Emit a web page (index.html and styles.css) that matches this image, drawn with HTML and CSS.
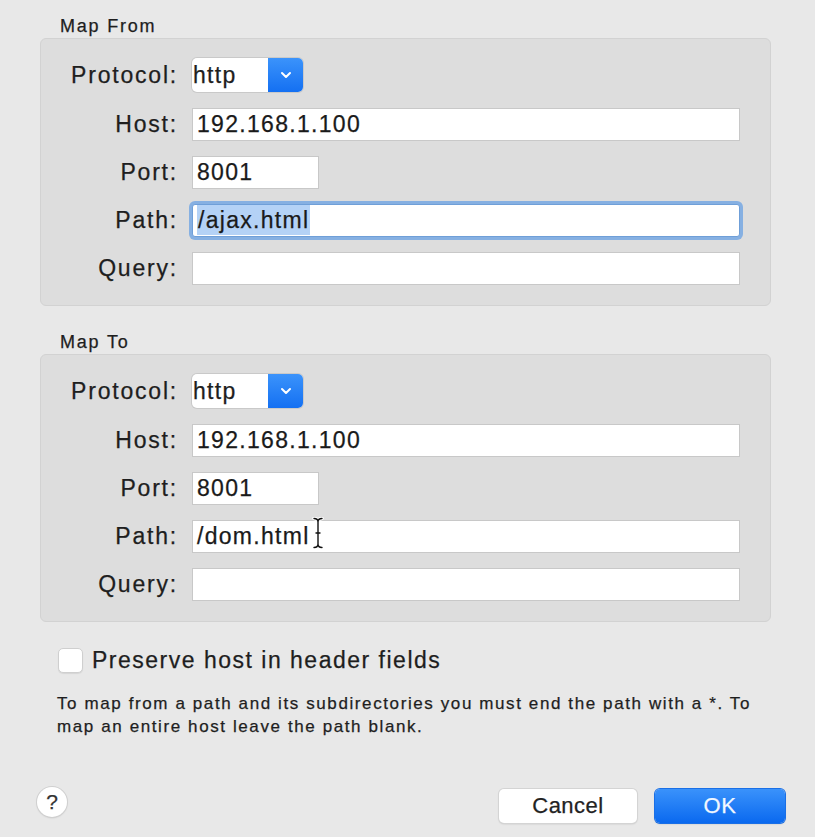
FILE: index.html
```html
<!DOCTYPE html>
<html>
<head>
<meta charset="utf-8">
<link rel="stylesheet" href="styles.css">
</head>
<body>
<div class="dialog">
  <div class="group-title">Map From</div>
  <div class="group">
    <div class="lbl">Protocol:</div>
    <div class="select">
      <span class="sel-val">http</span>
      <span class="sel-btn"><svg width="14" height="14" viewBox="0 0 14 14"><path d="M3 5 L7 9 L11 5" fill="none" stroke="#fff" stroke-width="2" stroke-linecap="round" stroke-linejoin="round"/></svg></span>
    </div>
    <div class="lbl">Host:</div>
    <div class="field">192.168.1.100</div>
    <div class="lbl">Port:</div>
    <div class="field port">8001</div>
    <div class="lbl">Path:</div>
    <div class="field focused"><span class="sel-text">/ajax.html</span></div>
    <div class="lbl">Query:</div>
    <div class="field"></div>
  </div>

  <div class="group-title second">Map To</div>
  <div class="group">
    <div class="lbl">Protocol:</div>
    <div class="select">
      <span class="sel-val">http</span>
      <span class="sel-btn"><svg width="14" height="14" viewBox="0 0 14 14"><path d="M3 5 L7 9 L11 5" fill="none" stroke="#fff" stroke-width="2" stroke-linecap="round" stroke-linejoin="round"/></svg></span>
    </div>
    <div class="lbl">Host:</div>
    <div class="field">192.168.1.100</div>
    <div class="lbl">Port:</div>
    <div class="field port">8001</div>
    <div class="lbl">Path:</div>
    <div class="field cursor-host">/dom.html<svg class="ibeam" width="12" height="32" viewBox="0 0 12 32"><path d="M2 1.5 Q6 1.5 6 5 Q6 1.5 10 1.5 M6 5 V27 M2 30.5 Q6 30.5 6 27 Q6 30.5 10 30.5 M4 16 H8" fill="none" stroke="#fff" stroke-width="3.5" stroke-linecap="round"/><path d="M2 1.5 Q6 1.5 6 5 Q6 1.5 10 1.5 M6 5 V27 M2 30.5 Q6 30.5 6 27 Q6 30.5 10 30.5 M4 16 H8" fill="none" stroke="#111" stroke-width="1.4" stroke-linecap="round"/></svg></div>
    <div class="lbl">Query:</div>
    <div class="field"></div>
  </div>

  <div class="check-row">
    <span class="checkbox"></span>
    <span class="check-label">Preserve host in header fields</span>
  </div>
  <p class="help">To map from a path and its subdirectories you must end the path with a *. To<br>map an entire host leave the path blank.</p>

  <div class="footer">
    <span class="help-btn">?</span>
    <div class="buttons">
      <button class="btn">Cancel</button>
      <button class="btn primary">OK</button>
    </div>
  </div>
</div>
</body>
</html>
```

FILE: styles.css
```css
html, body {
  margin: 0;
  padding: 0;
  background: #e8e8e8;
}
body {
  font-family: "Liberation Sans", Arial, sans-serif;
  color: #1e1e1e;
  width: 815px;
  height: 837px;
  overflow: hidden;
  -webkit-text-stroke: 0.25px currentColor;
}
.dialog {
  padding: 14px 30px 0 40px;
}
.group-title {
  font-size: 18px;
  letter-spacing: 1.8px;
  line-height: 24px;
  height: 24px;
  padding-left: 20px;
}
.group-title.second {
  margin-top: 24px;
}
.group {
  width: 731px;
  box-sizing: border-box;
  background: #dddddd;
  border: 1px solid #d2d2d2;
  border-radius: 6px;
  display: grid;
  grid-template-columns: 137px 548px;
  column-gap: 14px;
  row-gap: 15px;
  padding: 19px 0 20px 0;
}
.lbl {
  font-size: 23px;
  letter-spacing: 1.8px;
  text-align: right;
  align-self: center;
}
.field {
  height: 33px;
  box-sizing: border-box;
  background: #fff;
  border: 1px solid #c8c8c8;
  padding-left: 4px;
  font-size: 23px;
  letter-spacing: 1.3px;
  line-height: 31px;
  color: #1a1a1a;
  white-space: nowrap;
}
.field.port {
  width: 127px;
}
.field.focused {
  border-color: #6f9fd8;
  border-radius: 3px;
  box-shadow: 0 0 0 3px #86b0e2;
}
.sel-text {
  background: #b4d2f6;
  padding: 2px 1px;
}
.cursor-host {
  position: relative;
}
.ibeam {
  position: absolute;
  left: 119px;
  top: -4px;
}
.select {
  display: flex;
  width: 111px;
  height: 34px;
  margin-bottom: 1px;
  box-sizing: border-box;
  border-radius: 5px;
  overflow: hidden;
  box-shadow: 0 0 0 1px #c9c9c9;
  background: #fff;
}
.sel-val {
  flex: 1;
  font-size: 23px;
  letter-spacing: 1.3px;
  line-height: 34px;
  padding-left: 1px;
}
.sel-btn {
  width: 35px;
  display: flex;
  align-items: center;
  justify-content: center;
  background: linear-gradient(#3b93fb, #1470f2);
}
.check-row {
  display: flex;
  align-items: center;
  margin-top: 26px;
  margin-left: 18px;
  height: 25px;
}
.checkbox {
  width: 25px;
  height: 25px;
  box-sizing: border-box;
  background: #fff;
  border: 1px solid #cfcfcf;
  border-radius: 5px;
  box-shadow: 0 1px 1px rgba(0,0,0,0.08);
  -webkit-text-stroke: 0;
}
.check-label {
  margin-left: 9px;
  font-size: 23px;
  letter-spacing: 1.5px;
}
.help {
  margin: 19px 0 0 17px;
  font-size: 17px;
  letter-spacing: 1.6px;
  line-height: 23px;
}
.footer {
  display: flex;
  justify-content: space-between;
  align-items: flex-start;
  margin-top: 51px;
  margin-left: -3px;
}
.help-btn {
  width: 30px;
  height: 30px;
  margin-top: -2px;
  border-radius: 50%;
  background: #fff;
  box-shadow: 0 0 0 1px #d0d0d0, 0 1px 2px rgba(0,0,0,0.15);
  font-size: 21px;
  line-height: 30px;
  text-align: center;
  color: #333;
}
.buttons {
  display: flex;
  gap: 18px;
}
.btn {
  height: 34px;
  border-radius: 5px;
  font-family: "Liberation Sans", Arial, sans-serif;
  font-size: 22px;
  letter-spacing: 0.5px;
  border: none;
  padding: 0;
  width: 138px;
  background: #fff;
  color: #222;
  box-shadow: 0 0 0 1px #d4d4d4, 0 1px 2px rgba(0,0,0,0.2);
  -webkit-text-stroke: 0.25px currentColor;
}
.btn.primary {
  width: 130px;
  background: linear-gradient(#3a92fb, #0a69ef);
  color: #f1f7ff;
  box-shadow: 0 0 0 1px #1a6fe6, 0 1px 2px rgba(0,0,0,0.2);
}
```
